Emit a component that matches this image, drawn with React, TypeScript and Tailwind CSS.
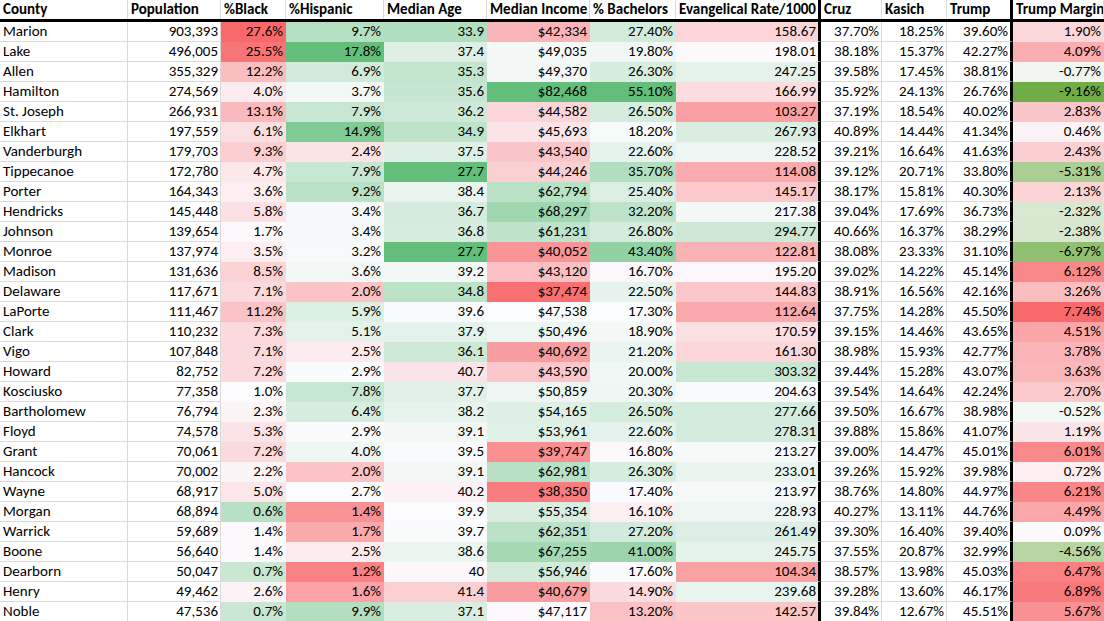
import React from "react"

type RGB = [number, number, number]

const GREEN: RGB = [99, 190, 123]
const OLIVE: RGB = [112, 173, 71]
const WHITE: RGB = [252, 252, 255]
const RED: RGB = [248, 105, 107]

type Scale = { min: number; mid: number; max: number; low: RGB; high: RGB }

type Col = {
  label: string
  width: string
  left?: boolean
  thick?: boolean
  scale?: Scale
}

const cols: Col[] = [
  { label: "County", width: "w-[128px]", left: true },
  { label: "Population", width: "w-[93px]" },
  { label: "%Black", width: "w-[65px]", scale: { min: 0.1, mid: 1.0, max: 27.6, low: GREEN, high: RED } },
  { label: "%Hispanic", width: "w-[98px]", scale: { min: 0.9, mid: 2.7, max: 17.8, low: RED, high: GREEN } },
  { label: "Median Age", width: "w-[103px]", scale: { min: 27.7, mid: 39.85, max: 45, low: GREEN, high: RED } },
  { label: "Median Income", width: "w-[103px]", scale: { min: 37000, mid: 47300, max: 82468, low: RED, high: GREEN } },
  { label: "% Bachelors", width: "w-[86px]", scale: { min: 7.5, mid: 17, max: 55.1, low: RED, high: GREEN } },
  { label: "Evangelical Rate/1000", width: "w-[145px]", thick: true, scale: { min: 45, mid: 200, max: 500, low: RED, high: GREEN } },
  { label: "Cruz", width: "w-[61px]" },
  { label: "Kasich", width: "w-[65px]" },
  { label: "Trump", width: "w-[66px]", thick: true },
  { label: "Trump Margin", width: "w-[91px]", scale: { min: -9.16, mid: 0, max: 7.74, low: OLIVE, high: RED } },
]

const rows: string[][] = [
  ["Marion", "903,393", "27.6%", "9.7%", "33.9", "$42,334", "27.40%", "158.67", "37.70%", "18.25%", "39.60%", "1.90%"],
  ["Lake", "496,005", "25.5%", "17.8%", "37.4", "$49,035", "19.80%", "198.01", "38.18%", "15.37%", "42.27%", "4.09%"],
  ["Allen", "355,329", "12.2%", "6.9%", "35.3", "$49,370", "26.30%", "247.25", "39.58%", "17.45%", "38.81%", "-0.77%"],
  ["Hamilton", "274,569", "4.0%", "3.7%", "35.6", "$82,468", "55.10%", "166.99", "35.92%", "24.13%", "26.76%", "-9.16%"],
  ["St. Joseph", "266,931", "13.1%", "7.9%", "36.2", "$44,582", "26.50%", "103.27", "37.19%", "18.54%", "40.02%", "2.83%"],
  ["Elkhart", "197,559", "6.1%", "14.9%", "34.9", "$45,693", "18.20%", "267.93", "40.89%", "14.44%", "41.34%", "0.46%"],
  ["Vanderburgh", "179,703", "9.3%", "2.4%", "37.5", "$43,540", "22.60%", "228.52", "39.21%", "16.64%", "41.63%", "2.43%"],
  ["Tippecanoe", "172,780", "4.7%", "7.9%", "27.7", "$44,246", "35.70%", "114.08", "39.12%", "20.71%", "33.80%", "-5.31%"],
  ["Porter", "164,343", "3.6%", "9.2%", "38.4", "$62,794", "25.40%", "145.17", "38.17%", "15.81%", "40.30%", "2.13%"],
  ["Hendricks", "145,448", "5.8%", "3.4%", "36.7", "$68,297", "32.20%", "217.38", "39.04%", "17.69%", "36.73%", "-2.32%"],
  ["Johnson", "139,654", "1.7%", "3.4%", "36.8", "$61,231", "26.80%", "294.77", "40.66%", "16.37%", "38.29%", "-2.38%"],
  ["Monroe", "137,974", "3.5%", "3.2%", "27.7", "$40,052", "43.40%", "122.81", "38.08%", "23.33%", "31.10%", "-6.97%"],
  ["Madison", "131,636", "8.5%", "3.6%", "39.2", "$43,120", "16.70%", "195.20", "39.02%", "14.22%", "45.14%", "6.12%"],
  ["Delaware", "117,671", "7.1%", "2.0%", "34.8", "$37,474", "22.50%", "144.83", "38.91%", "16.56%", "42.16%", "3.26%"],
  ["LaPorte", "111,467", "11.2%", "5.9%", "39.6", "$47,538", "17.30%", "112.64", "37.75%", "14.28%", "45.50%", "7.74%"],
  ["Clark", "110,232", "7.3%", "5.1%", "37.9", "$50,496", "18.90%", "170.59", "39.15%", "14.46%", "43.65%", "4.51%"],
  ["Vigo", "107,848", "7.1%", "2.5%", "36.1", "$40,692", "21.20%", "161.30", "38.98%", "15.93%", "42.77%", "3.78%"],
  ["Howard", "82,752", "7.2%", "2.9%", "40.7", "$43,590", "20.00%", "303.32", "39.44%", "15.28%", "43.07%", "3.63%"],
  ["Kosciusko", "77,358", "1.0%", "7.8%", "37.7", "$50,859", "20.30%", "204.63", "39.54%", "14.64%", "42.24%", "2.70%"],
  ["Bartholomew", "76,794", "2.3%", "6.4%", "38.2", "$54,165", "26.50%", "277.66", "39.50%", "16.67%", "38.98%", "-0.52%"],
  ["Floyd", "74,578", "5.3%", "2.9%", "39.1", "$53,961", "22.60%", "278.31", "39.88%", "15.86%", "41.07%", "1.19%"],
  ["Grant", "70,061", "7.2%", "4.0%", "39.5", "$39,747", "16.80%", "213.27", "39.00%", "14.47%", "45.01%", "6.01%"],
  ["Hancock", "70,002", "2.2%", "2.0%", "39.1", "$62,981", "26.30%", "233.01", "39.26%", "15.92%", "39.98%", "0.72%"],
  ["Wayne", "68,917", "5.0%", "2.7%", "40.2", "$38,350", "17.40%", "213.97", "38.76%", "14.80%", "44.97%", "6.21%"],
  ["Morgan", "68,894", "0.6%", "1.4%", "39.9", "$55,354", "16.10%", "228.93", "40.27%", "13.11%", "44.76%", "4.49%"],
  ["Warrick", "59,689", "1.4%", "1.7%", "39.7", "$62,351", "27.20%", "261.49", "39.30%", "16.40%", "39.40%", "0.09%"],
  ["Boone", "56,640", "1.4%", "2.5%", "38.6", "$67,255", "41.00%", "245.75", "37.55%", "20.87%", "32.99%", "-4.56%"],
  ["Dearborn", "50,047", "0.7%", "1.2%", "40", "$56,946", "17.60%", "104.34", "38.57%", "13.98%", "45.03%", "6.47%"],
  ["Henry", "49,462", "2.6%", "1.6%", "41.4", "$40,679", "14.90%", "239.68", "39.28%", "13.60%", "46.17%", "6.89%"],
  ["Noble", "47,536", "0.7%", "9.9%", "37.1", "$47,117", "13.20%", "142.57", "39.84%", "12.67%", "45.51%", "5.67%"],
]

function toNumber(s: string) {
  return parseFloat(s.replace(/[$,%]/g, ""))
}

// excel-style 3 colour scale: low -> white (mid) -> high
function shade(value: number, s: Scale) {
  const to = value >= s.mid ? s.high : s.low
  const span = value >= s.mid ? s.max - s.mid : s.mid - s.min
  const t = Math.min(1, Math.abs(value - s.mid) / span)
  const c = WHITE.map((w, i) => Math.round(w + (to[i] - w) * t))
  return `rgb(${c[0]}, ${c[1]}, ${c[2]})`
}

function Cell({ col, text }: { col: Col; text: string }) {
  const fill = col.scale ? shade(toNumber(text), col.scale) : undefined
  const style: React.CSSProperties | undefined = fill
    ? {
        backgroundColor: fill,
        borderBottomColor: fill,
        ...(col.thick ? {} : { borderRightColor: fill }),
      }
    : undefined

  return (
    <div
      className={`${col.width} shrink-0 h-5 border-b border-r border-[#dadada] leading-[19px] whitespace-nowrap overflow-hidden ${
        col.left ? "pl-[3px] text-left" : "pr-[2px] text-right"
      } ${col.thick ? "border-r-[3px] border-r-black" : ""}`}
      style={style}
    >
      {text}
    </div>
  )
}

export default function App() {
  return (
    <div
      className="w-[1104px] h-[621px] overflow-hidden bg-white text-black text-[15px]"
      style={{ fontFamily: "Carlito, Lato, 'Liberation Sans', sans-serif" }}
    >
      <div className="flex border-b-[3px] border-black">
        {cols.map((c) => (
          <div
            key={c.label}
            className={`${c.width} shrink-0 h-[19px] pl-[3px] font-bold leading-[19px] whitespace-nowrap overflow-hidden border-r ${
              c.thick ? "border-r-[3px] border-r-black" : "border-r-[#dadada]"
            }`}
          >
            {c.label}
          </div>
        ))}
      </div>
      {rows.map((r) => (
        <div key={r[0]} className="flex">
          {cols.map((c, i) => (
            <Cell key={c.label} col={c} text={r[i]} />
          ))}
        </div>
      ))}
    </div>
  )
}
